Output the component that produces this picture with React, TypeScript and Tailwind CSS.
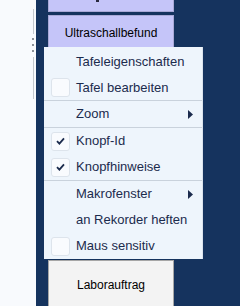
import React from 'react';

type Item =
  | { kind: 'item'; label: string; box?: boolean; checked?: boolean; sub?: boolean; h?: string }
  | { kind: 'sep' };

const items: Item[] = [
  { kind: 'item', label: 'Tafeleigenschaften' },
  { kind: 'item', label: 'Tafel bearbeiten', box: true, h: 'h-[25px]' },
  { kind: 'sep' },
  { kind: 'item', label: 'Zoom', sub: true },
  { kind: 'sep' },
  { kind: 'item', label: 'Knopf-Id', box: true, checked: true },
  { kind: 'item', label: 'Knopfhinweise', box: true, checked: true },
  { kind: 'sep' },
  { kind: 'item', label: 'Makrofenster', sub: true },
  { kind: 'item', label: 'an Rekorder heften' },
  { kind: 'item', label: 'Maus sensitiv', box: true },
];

const CheckBox: React.FC<{ checked?: boolean }> = ({ checked }) => (
  <div className="w-[19px] h-[19px] rounded-[3px] border border-[#dde4ec] bg-[#f9fbfe] flex items-center justify-center">
    {checked && (
      <svg width="9" height="8" viewBox="0 0 9 8">
        <path d="M1 4.2 L3.4 6.6 L8 1.4" fill="none" stroke="#1b2b4d" strokeWidth="1.8" />
      </svg>
    )}
  </div>
);

const ContextMenu: React.FC = () => (
  <div className="absolute left-[44px] top-[47px] w-[159px] pt-[2px] bg-[#eef5fc] border-r border-[#dbe3ec] text-[13px] text-[#1b2b4d] [font-family:'Liberation_Sans',Arial,sans-serif]">
    {items.map((it, i) =>
      it.kind === 'sep' ? (
        <div key={`sep-${i}`} className="h-px bg-[#c9d2dc]" />
      ) : (
        <div key={it.label} className={`flex items-center ${it.h ?? 'h-[26px]'}`}>
          <div className="w-[32px] pl-[7px] flex items-center">
            {it.box && <CheckBox checked={it.checked} />}
          </div>
          <span className="flex-1">{it.label}</span>
          {it.sub && (
            <svg width="6" height="9" viewBox="0 0 6 9" className="mr-[8px]">
              <path d="M0 0 L5 4.5 L0 9 Z" fill="#1b2b4d" />
            </svg>
          )}
        </div>
      )
    )}
  </div>
);

const Knopf: React.FC<{ h: string; children?: React.ReactNode }> = ({ h, children }) => (
  <div className={`${h} bg-[#c5c5f9] border border-[#a9a9d6] flex items-center justify-center text-[12px] text-black`}>
    {children}
  </div>
);

export default function App() {
  return (
    <div className="relative w-[240px] h-[306px] flex overflow-hidden [font-family:'Liberation_Sans',Arial,sans-serif]">
      {/* linker Rand mit Splitter */}
      <div className="w-[36px] bg-[#f8fafd] flex flex-col items-end pr-[2px] pt-[9px]">
        <div className="w-px h-[25px] bg-[#c3c7cc]" />
        <div className="flex flex-col gap-[4px] mt-[4px]">
          <div className="w-[2px] h-[2px] bg-[#8c9198]" />
          <div className="w-[2px] h-[2px] bg-[#8c9198]" />
          <div className="w-[2px] h-[2px] bg-[#8c9198]" />
        </div>
        <div className="w-px h-[42px] bg-[#c3c7cc] mt-[5px]" />
      </div>

      {/* Knopftafel */}
      <div className="flex-1 bg-[#15335e] pl-[12px]">
        <div className="w-[126px] flex flex-col gap-[3px] -mt-[24px]">
          <div className="h-[36px] bg-[#c5c5f9] border border-[#a9a9d6] flex flex-col items-center justify-end">
            <div className="w-[3px] h-[2px] bg-[#2a2a40] mb-[9px] -ml-[28px]" />
          </div>
          <Knopf h="h-[36px]">Ultraschallbefund</Knopf>
          <Knopf h="h-[38px]" />
          <Knopf h="h-[38px]" />
          <Knopf h="h-[38px]" />
          <Knopf h="h-[38px]" />
          <Knopf h="h-[39px]" />
          <div className="h-[50px] bg-[#f3f3f3] border border-[#a6a6a6] flex items-center justify-center text-[12px] text-black">
            Laborauftrag
          </div>
        </div>
      </div>

      <ContextMenu />
    </div>
  );
}
